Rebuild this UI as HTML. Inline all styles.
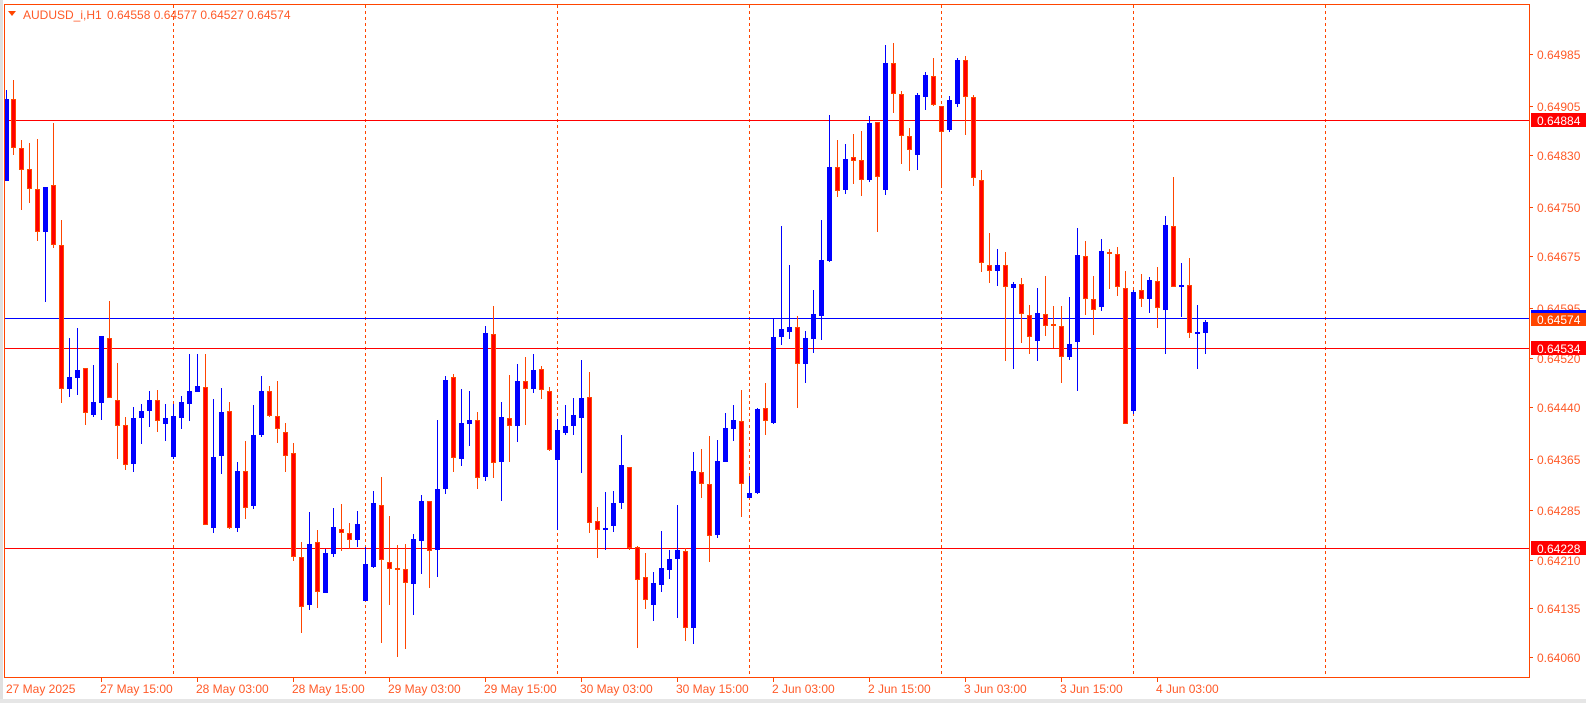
<!DOCTYPE html>
<html><head><meta charset="utf-8"><style>
html,body{margin:0;padding:0;background:#fff;width:1586px;height:703px;overflow:hidden}
svg{display:block}
text{font-family:"Liberation Sans",sans-serif;font-size:12px}
</style></head><body>
<svg width="1586" height="703" viewBox="0 0 1586 703" xmlns="http://www.w3.org/2000/svg">
<rect x="0" y="0" width="1586" height="703" fill="#fff"/>
<rect x="0" y="0" width="3" height="703" fill="#e0e0e0"/>
<rect x="0" y="699" width="1586" height="4" fill="#e6e6e6"/>
<g stroke="#ff4500" stroke-width="1" stroke-dasharray="3,3">
<line x1="173.5" y1="5" x2="173.5" y2="677"/><line x1="365.5" y1="5" x2="365.5" y2="677"/><line x1="557.5" y1="5" x2="557.5" y2="677"/><line x1="749.5" y1="5" x2="749.5" y2="677"/><line x1="941.5" y1="5" x2="941.5" y2="677"/><line x1="1133.5" y1="5" x2="1133.5" y2="677"/><line x1="1325.5" y1="5" x2="1325.5" y2="677"/>
</g>
<g stroke-width="1">
<line x1="5" y1="120.5" x2="1529" y2="120.5" stroke="#ff0000"/>
<line x1="5" y1="318.5" x2="1529" y2="318.5" stroke="#0000ff"/>
<line x1="5" y1="348.5" x2="1529" y2="348.5" stroke="#ff0000"/>
<line x1="5" y1="548.5" x2="1529" y2="548.5" stroke="#ff0000"/>
</g>
<path fill="none" stroke="#0000ff" stroke-width="1" d="M6.5 90V181M45.5 187V302M69.5 338V397M77.5 328V395M93.5 365V417M101.5 336V420M133.5 407V472M141.5 404V444M149.5 391V427M165.5 404V441M173.5 404V459M181.5 396V429M189.5 354V421M197.5 354V392M213.5 399V533M221.5 388V474M237.5 462V532M253.5 405V509M261.5 376V437M309.5 512V610M325.5 549V593M333.5 508V557M357.5 511V547M365.5 547V601M373.5 491V568M413.5 534V615M421.5 495V574M437.5 420V577M445.5 376V494M461.5 389V466M469.5 391V446M485.5 326V481M501.5 402V501M517.5 364V442M533.5 354V393M557.5 419V530M565.5 405V435M573.5 398V435M581.5 360V473M605.5 492V550M613.5 491V532M621.5 435V509M653.5 572V621M661.5 531V592M669.5 550V579M677.5 505V618M693.5 452V644M717.5 440V538M725.5 413V461M733.5 405V441M749.5 476V498M757.5 408V494M773.5 318V424M781.5 226V345M789.5 265V339M805.5 331V383M813.5 290V353M821.5 220V340M829.5 115V262M845.5 144V194M869.5 116V182M885.5 45V195M917.5 93V170M925.5 72V110M949.5 96V132M957.5 58V107M997.5 249V286M1013.5 282V369M1037.5 288V361M1069.5 297V360M1077.5 228V391M1101.5 239V311M1133.5 290V414M1149.5 277V313M1165.5 216V354M1181.5 263V317M1197.5 305V369M1205.5 320V354"/>
<path fill="none" stroke="#ff4500" stroke-width="1" d="M13.5 80V155M21.5 140V210M29.5 143V203M37.5 139V241M53.5 123V248M61.5 220V403M85.5 368V425M109.5 301V398M117.5 363V459M125.5 417V470M157.5 390V432M205.5 354V525M229.5 402V529M245.5 441V519M269.5 386V417M277.5 381V443M285.5 423V472M293.5 443V561M301.5 542V633M317.5 530V608M341.5 504V551M349.5 523V549M381.5 477V643M389.5 516V605M397.5 545V657M405.5 544V649M429.5 501V588M453.5 374V472M477.5 412V489M493.5 306V478M509.5 375V462M525.5 357V425M541.5 366V399M549.5 387V451M589.5 372V533M597.5 507V558M629.5 467V550M637.5 546V648M645.5 553V609M685.5 548V641M701.5 449V498M709.5 436V562M741.5 390V517M765.5 383V435M797.5 316V408M837.5 140V197M853.5 134V184M861.5 131V196M877.5 122V232M893.5 43V113M901.5 91V164M909.5 128V171M933.5 58V106M941.5 106V186M965.5 56V135M973.5 95V186M981.5 170V272M989.5 233V283M1005.5 252V361M1021.5 278V343M1029.5 305V354M1045.5 276V336M1053.5 306V348M1061.5 306V383M1085.5 241V315M1093.5 276V335M1109.5 249V289M1117.5 247V296M1125.5 271V424M1141.5 274V307M1157.5 267V328M1173.5 177V287M1189.5 258V338"/>
<g fill="#0000ff">
<rect x="4" y="99" width="5" height="82"/><rect x="43" y="187" width="5" height="45"/><rect x="67" y="377" width="5" height="12"/><rect x="75" y="370" width="5" height="8"/><rect x="91" y="402" width="5" height="13"/><rect x="99" y="336" width="5" height="67"/><rect x="131" y="418" width="5" height="46"/><rect x="139" y="411" width="5" height="7"/><rect x="147" y="400" width="5" height="11"/><rect x="163" y="418" width="5" height="6"/><rect x="171" y="416" width="5" height="41"/><rect x="179" y="402" width="5" height="16"/><rect x="187" y="391" width="5" height="13"/><rect x="195" y="386" width="5" height="6"/><rect x="211" y="457" width="5" height="71"/><rect x="219" y="412" width="5" height="44"/><rect x="235" y="471" width="5" height="57"/><rect x="251" y="435" width="5" height="71"/><rect x="259" y="391" width="5" height="44"/><rect x="307" y="544" width="5" height="61"/><rect x="323" y="553" width="5" height="40"/><rect x="331" y="527" width="5" height="27"/><rect x="355" y="524" width="5" height="16"/><rect x="363" y="564" width="5" height="37"/><rect x="371" y="503" width="5" height="64"/><rect x="411" y="539" width="5" height="45"/><rect x="419" y="501" width="5" height="40"/><rect x="435" y="489" width="5" height="61"/><rect x="443" y="380" width="5" height="109"/><rect x="459" y="423" width="5" height="36"/><rect x="467" y="420" width="5" height="4"/><rect x="483" y="333" width="5" height="144"/><rect x="499" y="417" width="5" height="45"/><rect x="515" y="381" width="5" height="45"/><rect x="531" y="370" width="5" height="19"/><rect x="555" y="430" width="5" height="30"/><rect x="563" y="426" width="5" height="7"/><rect x="571" y="415" width="5" height="11"/><rect x="579" y="398" width="5" height="20"/><rect x="603" y="528" width="5" height="2"/><rect x="611" y="503" width="5" height="23"/><rect x="619" y="465" width="5" height="38"/><rect x="651" y="583" width="5" height="22"/><rect x="659" y="568" width="5" height="17"/><rect x="667" y="559" width="5" height="11"/><rect x="675" y="550" width="5" height="9"/><rect x="691" y="471" width="5" height="157"/><rect x="715" y="461" width="5" height="74"/><rect x="723" y="428" width="5" height="34"/><rect x="731" y="420" width="5" height="9"/><rect x="747" y="493" width="5" height="5"/><rect x="755" y="409" width="5" height="84"/><rect x="771" y="337" width="5" height="86"/><rect x="779" y="329" width="5" height="8"/><rect x="787" y="327" width="5" height="5"/><rect x="803" y="338" width="5" height="26"/><rect x="811" y="314" width="5" height="25"/><rect x="819" y="260" width="5" height="56"/><rect x="827" y="167" width="5" height="94"/><rect x="843" y="159" width="5" height="31"/><rect x="867" y="123" width="5" height="57"/><rect x="883" y="63" width="5" height="127"/><rect x="915" y="95" width="5" height="60"/><rect x="923" y="75" width="5" height="22"/><rect x="947" y="100" width="5" height="30"/><rect x="955" y="60" width="5" height="44"/><rect x="995" y="265" width="5" height="6"/><rect x="1011" y="284" width="5" height="4"/><rect x="1035" y="313" width="5" height="28"/><rect x="1067" y="344" width="5" height="13"/><rect x="1075" y="255" width="5" height="87"/><rect x="1099" y="251" width="5" height="56"/><rect x="1131" y="292" width="5" height="119"/><rect x="1147" y="280" width="5" height="19"/><rect x="1163" y="225" width="5" height="85"/><rect x="1179" y="285" width="5" height="2"/><rect x="1195" y="332" width="5" height="2"/><rect x="1203" y="322" width="5" height="11"/>
</g>
<g fill="#ff0000" stroke="#ff4500" stroke-width="1">
<rect x="11.5" y="99.5" width="4" height="48"/><rect x="19.5" y="148.5" width="4" height="21"/><rect x="27.5" y="169.5" width="4" height="19"/><rect x="35.5" y="189.5" width="4" height="42"/><rect x="51.5" y="185.5" width="4" height="59"/><rect x="59.5" y="245.5" width="4" height="143"/><rect x="83.5" y="368.5" width="4" height="44"/><rect x="107.5" y="338.5" width="4" height="59"/><rect x="115.5" y="400.5" width="4" height="25"/><rect x="123.5" y="425.5" width="4" height="39"/><rect x="155.5" y="400.5" width="4" height="20"/><rect x="203.5" y="387.5" width="4" height="137"/><rect x="227.5" y="411.5" width="4" height="116"/><rect x="243.5" y="471.5" width="4" height="36"/><rect x="267.5" y="391.5" width="4" height="24"/><rect x="275.5" y="416.5" width="4" height="12"/><rect x="283.5" y="432.5" width="4" height="23"/><rect x="291.5" y="453.5" width="4" height="103"/><rect x="299.5" y="557.5" width="4" height="49"/><rect x="315.5" y="542.5" width="4" height="49"/><rect x="339.5" y="529.5" width="4" height="3"/><rect x="347.5" y="533.5" width="4" height="6"/><rect x="379.5" y="505.5" width="4" height="54"/><rect x="387.5" y="562.5" width="4" height="6"/><rect x="395.5" y="568.5" width="4" height="1"/><rect x="403.5" y="569.5" width="4" height="13"/><rect x="427.5" y="501.5" width="4" height="49"/><rect x="451.5" y="377.5" width="4" height="80"/><rect x="475.5" y="420.5" width="4" height="57"/><rect x="491.5" y="334.5" width="4" height="128"/><rect x="507.5" y="418.5" width="4" height="7"/><rect x="523.5" y="381.5" width="4" height="7"/><rect x="539.5" y="369.5" width="4" height="20"/><rect x="547.5" y="391.5" width="4" height="58"/><rect x="587.5" y="397.5" width="4" height="125"/><rect x="595.5" y="521.5" width="4" height="8"/><rect x="627.5" y="467.5" width="4" height="80"/><rect x="635.5" y="547.5" width="4" height="32"/><rect x="643.5" y="577.5" width="4" height="22"/><rect x="683.5" y="551.5" width="4" height="76"/><rect x="699.5" y="472.5" width="4" height="11"/><rect x="707.5" y="484.5" width="4" height="51"/><rect x="739.5" y="421.5" width="4" height="62"/><rect x="763.5" y="408.5" width="4" height="12"/><rect x="795.5" y="327.5" width="4" height="36"/><rect x="835.5" y="167.5" width="4" height="23"/><rect x="851.5" y="157.5" width="4" height="3"/><rect x="859.5" y="160.5" width="4" height="19"/><rect x="875.5" y="122.5" width="4" height="54"/><rect x="891.5" y="63.5" width="4" height="30"/><rect x="899.5" y="94.5" width="4" height="41"/><rect x="907.5" y="136.5" width="4" height="13"/><rect x="931.5" y="76.5" width="4" height="28"/><rect x="939.5" y="106.5" width="4" height="25"/><rect x="963.5" y="60.5" width="4" height="36"/><rect x="971.5" y="97.5" width="4" height="80"/><rect x="979.5" y="180.5" width="4" height="82"/><rect x="987.5" y="265.5" width="4" height="5"/><rect x="1003.5" y="265.5" width="4" height="21"/><rect x="1019.5" y="284.5" width="4" height="29"/><rect x="1027.5" y="315.5" width="4" height="21"/><rect x="1043.5" y="314.5" width="4" height="11"/><rect x="1051.5" y="324.5" width="4" height="1"/><rect x="1059.5" y="326.5" width="4" height="30"/><rect x="1083.5" y="256.5" width="4" height="42"/><rect x="1091.5" y="299.5" width="4" height="10"/><rect x="1107.5" y="252.5" width="4" height="1"/><rect x="1115.5" y="254.5" width="4" height="32"/><rect x="1123.5" y="288.5" width="4" height="135"/><rect x="1139.5" y="290.5" width="4" height="8"/><rect x="1155.5" y="281.5" width="4" height="26"/><rect x="1171.5" y="226.5" width="4" height="60"/><rect x="1187.5" y="285.5" width="4" height="47"/>
</g>
<rect x="4.5" y="4.5" width="1525" height="673" fill="none" stroke="#ff4500"/>
<polygon points="8,11 16,11 12,16" fill="#ff4500"/>
<text x="23" y="19" fill="#ff5a28">AUDUSD_i,H1</text>
<text x="107" y="19" fill="#ff5a28">0.64558 0.64577 0.64527 0.64574</text>
<g stroke="#ff4500">
<line x1="1529" y1="54.5" x2="1533" y2="54.5"/><line x1="1529" y1="106.5" x2="1533" y2="106.5"/><line x1="1529" y1="155.5" x2="1533" y2="155.5"/><line x1="1529" y1="207.5" x2="1533" y2="207.5"/><line x1="1529" y1="256.5" x2="1533" y2="256.5"/><line x1="1529" y1="308.5" x2="1533" y2="308.5"/><line x1="1529" y1="358.5" x2="1533" y2="358.5"/><line x1="1529" y1="407.5" x2="1533" y2="407.5"/><line x1="1529" y1="459.5" x2="1533" y2="459.5"/><line x1="1529" y1="510.5" x2="1533" y2="510.5"/><line x1="1529" y1="560.5" x2="1533" y2="560.5"/><line x1="1529" y1="608.5" x2="1533" y2="608.5"/><line x1="1529" y1="657.5" x2="1533" y2="657.5"/>
</g>
<g fill="#ff5a28">
<text x="1537" y="59">0.64985</text><text x="1537" y="111">0.64905</text><text x="1537" y="160">0.64830</text><text x="1537" y="212">0.64750</text><text x="1537" y="261">0.64675</text><text x="1537" y="313">0.64595</text><text x="1537" y="363">0.64520</text><text x="1537" y="412">0.64440</text><text x="1537" y="464">0.64365</text><text x="1537" y="515">0.64285</text><text x="1537" y="565">0.64210</text><text x="1537" y="613">0.64135</text><text x="1537" y="662">0.64060</text>
</g>
<rect x="1531" y="113" width="55" height="14" fill="#ff0000"/><text x="1537" y="125" fill="#fff">0.64884</text>
<rect x="1531" y="310" width="55" height="4" fill="#0000ff"/>
<rect x="1531" y="313" width="55" height="13" fill="#ff4500"/><text x="1537" y="324" fill="#fff">0.64574</text>
<rect x="1531" y="341" width="55" height="14" fill="#ff0000"/><text x="1537" y="353" fill="#fff">0.64534</text>
<rect x="1531" y="541" width="55" height="14" fill="#ff0000"/><text x="1537" y="553" fill="#fff">0.64228</text>
<g stroke="#ff4500">
<line x1="101.5" y1="677" x2="101.5" y2="682"/><line x1="197.5" y1="677" x2="197.5" y2="682"/><line x1="293.5" y1="677" x2="293.5" y2="682"/><line x1="389.5" y1="677" x2="389.5" y2="682"/><line x1="485.5" y1="677" x2="485.5" y2="682"/><line x1="581.5" y1="677" x2="581.5" y2="682"/><line x1="677.5" y1="677" x2="677.5" y2="682"/><line x1="773.5" y1="677" x2="773.5" y2="682"/><line x1="869.5" y1="677" x2="869.5" y2="682"/><line x1="965.5" y1="677" x2="965.5" y2="682"/><line x1="1061.5" y1="677" x2="1061.5" y2="682"/><line x1="1157.5" y1="677" x2="1157.5" y2="682"/>
</g>
<g fill="#ff5a28">
<text x="6" y="693">27 May 2025</text><text x="100" y="693">27 May 15:00</text><text x="196" y="693">28 May 03:00</text><text x="292" y="693">28 May 15:00</text><text x="388" y="693">29 May 03:00</text><text x="484" y="693">29 May 15:00</text><text x="580" y="693">30 May 03:00</text><text x="676" y="693">30 May 15:00</text><text x="772" y="693">2 Jun 03:00</text><text x="868" y="693">2 Jun 15:00</text><text x="964" y="693">3 Jun 03:00</text><text x="1060" y="693">3 Jun 15:00</text><text x="1156" y="693">4 Jun 03:00</text>
</g>
</svg>
</body></html>
